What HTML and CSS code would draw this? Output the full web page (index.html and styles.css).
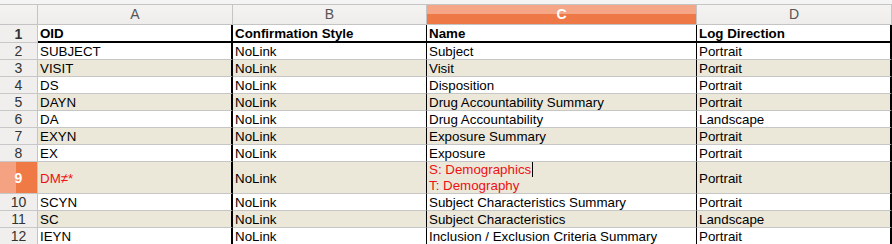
FILE: index.html
```html
<!DOCTYPE html>
<html>
<head>
<meta charset="utf-8">
<link rel="stylesheet" href="styles.css">
</head>
<body>
<div class="sheet">
  <div class="row colhead">
    <div class="cell corner"></div>
    <div class="cell ch">A</div>
    <div class="cell ch">B</div>
    <div class="cell ch ch-sel">C</div>
    <div class="cell ch">D</div>
  </div>
  <div class="row r-head">
    <div class="cell rn">1</div>
    <div class="cell a">OID</div>
    <div class="cell b">Confirmation Style</div>
    <div class="cell c">Name</div>
    <div class="cell d">Log Direction</div>
  </div>
  <div class="row">
    <div class="cell rn">2</div>
    <div class="cell a">SUBJECT</div>
    <div class="cell b">NoLink</div>
    <div class="cell c">Subject</div>
    <div class="cell d">Portrait</div>
  </div>
  <div class="row alt">
    <div class="cell rn">3</div>
    <div class="cell a">VISIT</div>
    <div class="cell b">NoLink</div>
    <div class="cell c">Visit</div>
    <div class="cell d">Portrait</div>
  </div>
  <div class="row">
    <div class="cell rn">4</div>
    <div class="cell a">DS</div>
    <div class="cell b">NoLink</div>
    <div class="cell c">Disposition</div>
    <div class="cell d">Portrait</div>
  </div>
  <div class="row alt">
    <div class="cell rn">5</div>
    <div class="cell a">DAYN</div>
    <div class="cell b">NoLink</div>
    <div class="cell c">Drug Accountability Summary</div>
    <div class="cell d">Portrait</div>
  </div>
  <div class="row">
    <div class="cell rn">6</div>
    <div class="cell a">DA</div>
    <div class="cell b">NoLink</div>
    <div class="cell c">Drug Accountability</div>
    <div class="cell d">Landscape</div>
  </div>
  <div class="row alt">
    <div class="cell rn">7</div>
    <div class="cell a">EXYN</div>
    <div class="cell b">NoLink</div>
    <div class="cell c">Exposure Summary</div>
    <div class="cell d">Portrait</div>
  </div>
  <div class="row">
    <div class="cell rn">8</div>
    <div class="cell a">EX</div>
    <div class="cell b">NoLink</div>
    <div class="cell c">Exposure</div>
    <div class="cell d">Portrait</div>
  </div>
  <div class="row alt tall">
    <div class="cell rn rn-sel">9</div>
    <div class="cell a diff">DM≠*</div>
    <div class="cell b">NoLink</div>
    <div class="cell c diff multi"><span>S: Demographics<span class="caret"></span></span><span>T: Demography</span></div>
    <div class="cell d">Portrait</div>
  </div>
  <div class="row">
    <div class="cell rn">10</div>
    <div class="cell a">SCYN</div>
    <div class="cell b">NoLink</div>
    <div class="cell c">Subject Characteristics Summary</div>
    <div class="cell d">Portrait</div>
  </div>
  <div class="row alt">
    <div class="cell rn">11</div>
    <div class="cell a">SC</div>
    <div class="cell b">NoLink</div>
    <div class="cell c">Subject Characteristics</div>
    <div class="cell d">Landscape</div>
  </div>
  <div class="row">
    <div class="cell rn">12</div>
    <div class="cell a">IEYN</div>
    <div class="cell b">NoLink</div>
    <div class="cell c">Inclusion / Exclusion Criteria Summary</div>
    <div class="cell d">Portrait</div>
  </div>
</div>
</body>
</html>
```
FILE: styles.css
```css
* { box-sizing: border-box; }
html, body {
  margin: 0;
  padding: 0;
  background: #ffffff;
}
body {
  padding-top: 4px;
  background: #f4f4f4;
  font-family: "Liberation Sans", Arial, sans-serif;
  font-size: 13.33px;
  color: #000;
  overflow: hidden;
}
.sheet {
  border-top: 1px solid #c4c4c4;
  background: #fff;
}
.row {
  display: grid;
  grid-template-columns: 38px 195px 194px 270px 195px;
  height: 17px;
  background: #fff;
}
.row.alt { background: #ebe8da; }
.row.tall { height: 32px; }
.row.r-head { height: 18px; font-weight: bold; }
.row.colhead { height: 20px; }

.cell {
  display: flex;
  align-items: center;
  padding-left: 2px;
  padding-top: 1px;
  white-space: nowrap;
  overflow: hidden;
  border-bottom: 1px solid #c6c6c6;
  border-right: 1px solid #c6c6c6;
  line-height: 15px;
}
.cell.a { border-right: 2px solid #000; }
.cell.b { border-right: 1px solid #000; }
.cell.c { border-right: 1px solid #000; }
.cell.d { border-right: 2px solid #000; }
.r-head .a, .r-head .b, .r-head .c, .r-head .d { border-bottom: 2px solid #000; }

.colhead .cell {
  background: linear-gradient(#f4f3f2, #eeedeb);
  justify-content: center;
  padding-left: 0;
  padding-top: 0;
  color: #555;
  font-size: 14px;
  border-right: 1px solid #c4c4c4;
  border-bottom: 1px solid #c4c4c4;
}
.colhead .ch-sel {
  background: linear-gradient(#f5a686 0, #f5a686 9px, #ef7946 9px, #ef7946 100%);
  color: #fff;
  font-weight: bold;
}
.rn {
  background: #f0efed;
  justify-content: center;
  padding-left: 0;
  color: #333;
  font-size: 14px;
  border-right: 1px solid #c4c4c4;
  border-bottom: 1px solid #c8c8c8;
}
.rn.rn-sel {
  background: linear-gradient(90deg, #f4a281 0, #f4a281 16px, #ef7a46 16px, #ef7a46 100%);
  color: #fff;
  font-weight: bold;
}
.diff { color: #ee1111; }
.multi {
  flex-direction: column;
  align-items: flex-start;
  justify-content: center;
  padding-top: 0;
  line-height: 16px;
}
.caret {
  display: inline-block;
  width: 1px;
  height: 15px;
  background: #000;
  vertical-align: -3px;
  margin-left: 1px;
}
```
